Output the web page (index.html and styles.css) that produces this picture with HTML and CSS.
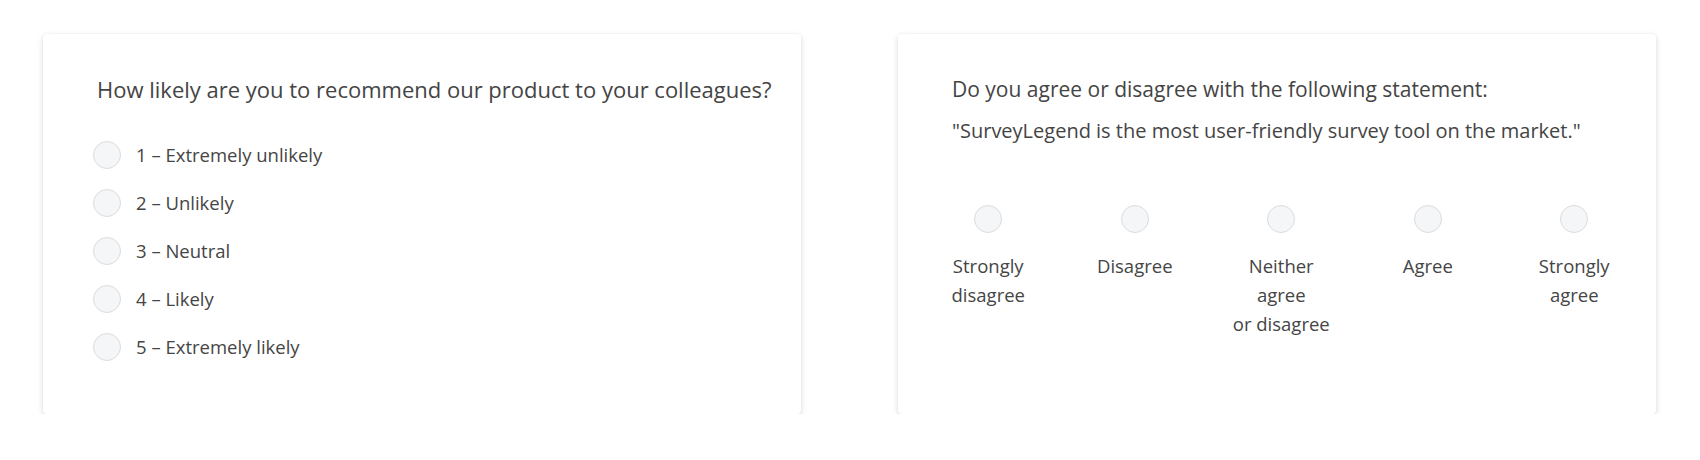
FILE: index.html
```html
<!DOCTYPE html>
<html lang="en">
<head>
<meta charset="utf-8">
<title>Survey questions</title>
<link rel="stylesheet" href="styles.css">
</head>
<body>
<main class="page">
  <section class="card">
    <h2 class="question question-wide">How likely are you to recommend our product to your colleagues?</h2>
    <ul class="options">
      <li class="option"><span class="radio"></span><span class="option-label">1 – Extremely unlikely</span></li>
      <li class="option"><span class="radio"></span><span class="option-label">2 – Unlikely</span></li>
      <li class="option"><span class="radio"></span><span class="option-label">3 – Neutral</span></li>
      <li class="option"><span class="radio"></span><span class="option-label">4 – Likely</span></li>
      <li class="option"><span class="radio"></span><span class="option-label">5 – Extremely likely</span></li>
    </ul>
  </section>
  <section class="card">
    <h2 class="question">Do you agree or disagree with the following statement:</h2>
    <p class="statement">"SurveyLegend is the most user-friendly survey tool on the market."</p>
    <ul class="scale">
      <li class="scale-item"><span class="radio"></span><span class="scale-label">Strongly<br>disagree</span></li>
      <li class="scale-item"><span class="radio"></span><span class="scale-label">Disagree</span></li>
      <li class="scale-item"><span class="radio"></span><span class="scale-label">Neither<br>agree<br>or disagree</span></li>
      <li class="scale-item"><span class="radio"></span><span class="scale-label">Agree</span></li>
      <li class="scale-item"><span class="radio"></span><span class="scale-label">Strongly<br>agree</span></li>
    </ul>
  </section>
</main>
</body>
</html>
```
FILE: styles.css
```css
html, body {
  margin: 0;
  padding: 0;
  background: #ffffff;
}

body {
  font-family: "Open Sans", "Noto Sans", "DejaVu Sans", sans-serif;
  color: #454545;
}

.page {
  display: flex;
  gap: 97px;
  padding: 34px 43px 0 43px;
}

.card {
  box-sizing: border-box;
  width: 758px;
  height: 380px;
  background: #ffffff;
  border-radius: 4px;
  box-shadow: 0 2px 6px rgba(0, 0, 0, 0.14), 0 0 2px rgba(0, 0, 0, 0.05);
  padding: 39px 54px 0 54px;
}

.question {
  margin: 0;
  font-size: 21px;
  font-weight: 400;
  line-height: 32px;
  color: #444444;
}

.question-wide {
  font-size: 22px;
  white-space: nowrap;
}

.statement {
  margin: 10px 0 0 0;
  font-size: 20px;
  line-height: 32px;
  color: #444444;
}

.options {
  list-style: none;
  margin: 36px 0 0 -4px;
  padding: 0;
  display: flex;
  flex-direction: column;
  gap: 20px;
}

.option {
  display: flex;
  align-items: center;
  gap: 15px;
  height: 28px;
}

.radio {
  box-sizing: border-box;
  width: 28px;
  height: 28px;
  border-radius: 50%;
  border: 1px solid #dadcdf;
  background: #f5f6f8;
  flex: none;
}

.option-label {
  font-size: 18.5px;
  line-height: 28px;
}

.scale {
  list-style: none;
  margin: 58px 0 0 -37px;
  padding: 0;
  display: grid;
  grid-template-columns: repeat(5, 146.5px);
}

.scale-item {
  display: flex;
  flex-direction: column;
  align-items: center;
  gap: 18px;
}

.scale-label {
  font-size: 18.5px;
  line-height: 29px;
  text-align: center;
}
```
